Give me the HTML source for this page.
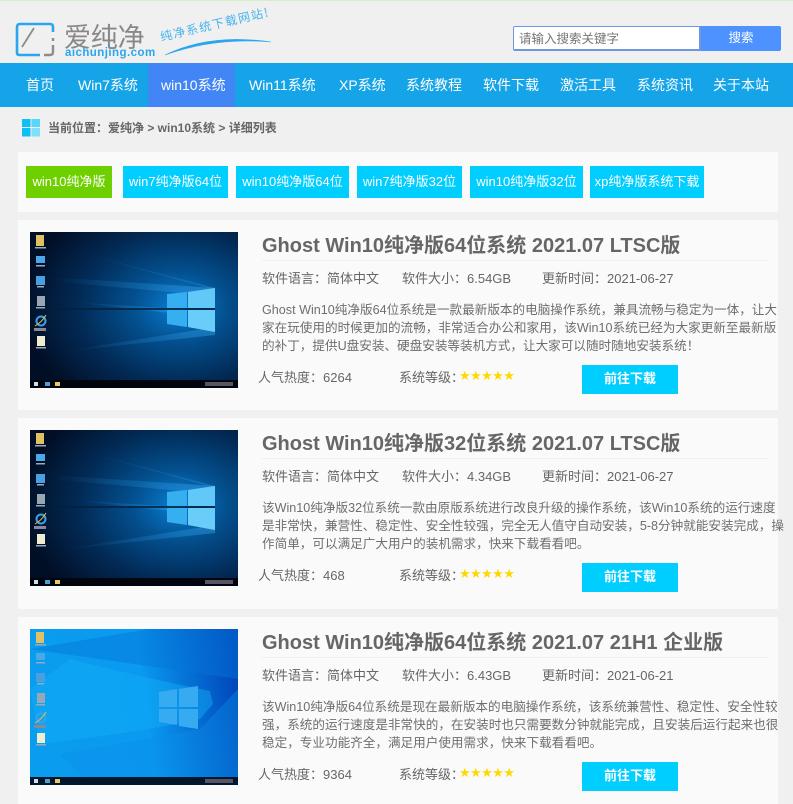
<!DOCTYPE html>
<html lang="zh-CN"><head><meta charset="utf-8"><title>win10系统</title>
<style>
*{margin:0;padding:0;box-sizing:border-box}
html,body{width:793px;height:804px;overflow:hidden;background:#f0f0f0}
body{position:relative;font-family:"Liberation Sans","Noto Sans CJK SC",sans-serif;color:#666;font-size:13px}
.a{position:absolute;white-space:nowrap}
.b{position:absolute}
.nav{color:#fff;font-size:14px;top:63px;height:44px;line-height:44px;text-align:center}
.tag{position:absolute;top:166px;height:32px;line-height:32px;text-align:center;color:#fff;background:#00ceff;font-size:13px}
.card{position:absolute;left:18px;width:760px;background:#fafafa}
.t{position:absolute;left:244px;top:12px;font-size:20px;font-weight:bold;color:#666;white-space:nowrap;line-height:28px}
.ln{position:absolute;left:244px;top:40px;width:506px;height:1px;background:#f0f0f0}
.m{position:absolute;top:50px;line-height:18px;white-space:nowrap;font-size:13px}
.d{position:absolute;left:244px;top:81px;line-height:18px;font-size:12.6px;white-space:nowrap;color:#6e6e6e}
.r{position:absolute;top:149px;line-height:18px;white-space:nowrap}
.s{position:absolute;left:441px;top:148px;color:#ffd800;font-size:13px;line-height:18px;letter-spacing:-.6px;white-space:nowrap;font-family:"DejaVu Sans",sans-serif}
.g{position:absolute;left:564px;top:145px;width:96px;height:29px;background:#00ceff;color:#fff;font-weight:bold;font-size:13px;line-height:28px;text-align:center}
.p{position:absolute;left:12px;top:12px;width:208px;height:156px;display:block}
</style></head><body>
<svg width="0" height="0" style="position:absolute">
<defs>
<radialGradient id="dg" cx="0.72" cy="0.48" r="0.75"><stop offset="0" stop-color="#0a7fd6"/><stop offset=".3" stop-color="#03508f"/><stop offset=".65" stop-color="#022a55"/><stop offset="1" stop-color="#010f26"/></radialGradient>
<linearGradient id="bg" x1="0" y1="0.5" x2="1" y2="0.4"><stop offset="0" stop-color="#0a9cee"/><stop offset=".55" stop-color="#0a9af0"/><stop offset="1" stop-color="#0147ba"/></linearGradient>
<linearGradient id="ray" x1="0" y1="0" x2="1" y2="0"><stop offset="0" stop-color="#1e8fe0" stop-opacity="0"/><stop offset="1" stop-color="#3eb0f5" stop-opacity=".85"/></linearGradient>
<g id="ic">
<rect x="6" y="3" width="8" height="11" fill="#e0c060"/><rect x="5" y="15" width="11" height="1.5" fill="#9ab"/>
<rect x="6" y="24" width="9" height="7" fill="#4aa8e8"/><rect x="6" y="33" width="9" height="1.5" fill="#9ab"/>
<rect x="6" y="44" width="9" height="9" fill="#4aa0de"/><rect x="7" y="54" width="7" height="1.5" fill="#9ab"/>
<rect x="7" y="64" width="8" height="10" fill="#99a7b2"/><rect x="6" y="75" width="9" height="1.5" fill="#9ab"/>
<circle cx="11" cy="89" r="4.5" fill="none" stroke="#3ba0e8" stroke-width="2"/><path d="M5 94Q12 90 16 83" stroke="#e8c040" fill="none"/><rect x="4" y="96" width="12" height="3" fill="#889"/>
<rect x="7" y="104" width="8" height="10" fill="#f0ecd0"/><rect x="6" y="115" width="10" height="1.5" fill="#9ab"/>
</g>
<symbol id="dk" viewBox="0 0 208 156">
<rect width="208" height="156" fill="url(#dg)"/>
<path d="M20 45L185 56 185 64 30 50Z" fill="url(#ray)" opacity=".5"/>
<path d="M40 70L150 77 150 82Z" fill="url(#ray)" opacity=".45"/>
<path d="M30 120L185 95 185 103Z" fill="url(#ray)" opacity=".45"/>
<path d="M30 15L185 56 185 58Z" fill="url(#ray)" opacity=".3"/>
<rect x="15" y="76" width="170" height="2" fill="#01213f" opacity=".8"/>
<path d="M137 62L157 60V76H137ZM158 60L185 56V76H158ZM137 78H157V95L137 92ZM158 78H185V100L158 95Z" fill="#36aff0"/>
<path d="M158 60L185 56V76H158Z" fill="#62c8f8"/><path d="M158 78H185V100L158 95Z" fill="#6accf8"/>
<use href="#ic"/>
<rect y="148" width="208" height="8" fill="#01060e"/>
<rect x="4" y="150" width="4" height="4" fill="#cde"/><rect x="15" y="150" width="5" height="4" fill="#4aa0d0"/><rect x="25" y="150" width="5" height="4" fill="#e8c868"/><rect x="175" y="150" width="28" height="4" fill="#556"/>
</symbol>
<symbol id="lt" viewBox="0 0 208 156">
<rect width="208" height="156" fill="url(#bg)"/>
<path d="M0 20L208 50V0H120Z" fill="#0576d6" opacity=".45"/>
<path d="M30 125L170 100 208 60V156H60Z" fill="#0b8ee8" opacity=".4"/>
<path d="M40 30Q120 50 180 62L183 75 170 90Q100 105 10 115L0 60Z" fill="#12b0f8" opacity=".45"/>
<path d="M129 63L147 60V78H129ZM149 60L168 57V78H149ZM129 80H147V96L129 93ZM149 80H168V100L149 97Z" fill="#37abf2"/>
<use href="#ic"/>
<rect y="148" width="208" height="8" fill="#03172c"/>
<rect x="4" y="150" width="4" height="4" fill="#cde"/><rect x="15" y="150" width="5" height="4" fill="#4aa0d0"/><rect x="25" y="150" width="5" height="4" fill="#e8c868"/><rect x="175" y="150" width="28" height="4" fill="#556"/>
</symbol>
</defs></svg>

<div class="b" style="left:0;top:0;width:793px;height:1px;background:#d4f0c8"></div>

<svg class="b" style="left:14px;top:20px" width="42" height="40" viewBox="0 0 42 40">
<path d="M24 4H6Q3 4 3 7V33Q3 35 6 35H26" fill="none" stroke="#2aa6ee" stroke-width="2.6"/>
<path d="M24 4H36Q39 4 39 7V12" fill="none" stroke="#2aa6ee" stroke-width="2.6"/>
<path d="M8 27L20 8" stroke="#8c8c8c" stroke-width="1.8" fill="none"/>
<path d="M39 18V21M39 25V32Q39 35 36 35H30" stroke="#8c8c8c" stroke-width="2.4" fill="none"/>
</svg>
<div class="a" style="left:64px;top:21px;font-size:27px;line-height:30px;color:#888;letter-spacing:-.2px;width:84px;font-family:'Noto Sans CJK SC',sans-serif">爱纯净</div>
<div class="a" style="left:65px;top:46px;font-size:11.5px;line-height:14px;font-weight:bold;color:#2aa6ee;letter-spacing:.45px">aichunjing.com</div>
<div class="a" style="left:162px;top:27px;font-size:12px;line-height:14px;color:#45b4ee;transform:rotate(-13deg);transform-origin:0 100%;letter-spacing:1.3px;top:30px;font-family:'Noto Sans CJK SC',sans-serif">纯净系统下载网站!</div>
<svg class="b" style="left:160px;top:30px" width="115" height="30" viewBox="0 0 115 30"><path d="M5 25Q50 3 111 12Q55 7 5 25Z" fill="#2aa6ee" stroke="#2aa6ee" stroke-width=".6"/></svg>

<div class="b" style="left:513px;top:26px;width:188px;height:25px;background:#fff;border:1px solid #6f97e0;border-width:1px 2px 2px 1px;border-radius:2px 0 0 2px"></div>
<div class="a" style="left:519px;top:30px;line-height:18px;font-size:12.5px;color:#757575">请输入搜索关键字</div>
<div class="b" style="left:701px;top:26px;width:80px;height:25px;background:#4e92ff;color:#fff;text-align:center;line-height:25px;font-size:12.5px;border-radius:0 2px 2px 0">搜索</div>

<div class="b" style="left:0;top:63px;width:793px;height:44px;background:#16a4e9"></div>
<div class="b" style="left:148px;top:63px;width:87px;height:44px;background:#4285f4"></div>
<div class="a nav" style="left:26px">首页</div>
<div class="a nav" style="left:78px">Win7系统</div>
<div class="a nav" style="left:161px">win10系统</div>
<div class="a nav" style="left:249px">Win11系统</div>
<div class="a nav" style="left:339px">XP系统</div>
<div class="a nav" style="left:406px">系统教程</div>
<div class="a nav" style="left:483px">软件下载</div>
<div class="a nav" style="left:560px">激活工具</div>
<div class="a nav" style="left:637px">系统资讯</div>
<div class="a nav" style="left:713px">关于本站</div>

<svg class="b" style="left:22px;top:119px" width="18" height="18" viewBox="0 0 18 18"><rect width="8.5" height="8" fill="#0fc0f5"/><rect x="9.5" width="8.5" height="8" fill="#55d6fa"/><rect y="9" width="8.5" height="8.5" fill="#0fc0f5"/><rect x="9.5" y="9" width="8.5" height="8.5" fill="#7fe0fb"/></svg>
<div class="a" style="left:48px;top:119px;line-height:18px;font-size:12px;font-weight:bold;color:#666">当前位置：爱纯净 &gt; win10系统 &gt; 详细列表</div>

<div class="b" style="left:18px;top:152px;width:760px;height:60px;background:#fafafa"></div>
<div class="tag" style="left:26px;width:86px;background:#6fd000">win10纯净版</div>
<div class="tag" style="left:123px;width:105px">win7纯净版64位</div>
<div class="tag" style="left:236px;width:113px">win10纯净版64位</div>
<div class="tag" style="left:357px;width:105px">win7纯净版32位</div>
<div class="tag" style="left:470px;width:113px">win10纯净版32位</div>
<div class="tag" style="left:590px;width:114px">xp纯净版系统下载</div>

<div class="card" style="top:220px;height:190px">
<svg class="p"><use href="#dk" width="208" height="156"/></svg>
<div class="t">Ghost Win10纯净版64位系统 2021.07 LTSC版</div><div class="ln"></div>
<div class="m" style="left:244px">软件语言：简体中文</div><div class="m" style="left:384px">软件大小：6.54GB</div><div class="m" style="left:524px">更新时间：2021-06-27</div>
<div class="d">Ghost Win10纯净版64位系统是一款最新版本的电脑操作系统，兼具流畅与稳定为一体，让大<br>家在玩使用的时候更加的流畅，非常适合办公和家用，该Win10系统已经为大家更新至最新版<br>的补丁，提供U盘安装、硬盘安装等装机方式，让大家可以随时随地安装系统！</div>
<div class="r" style="left:240px">人气热度：6264</div><div class="r" style="left:381px">系统等级：</div><div class="s">★★★★★</div><div class="g">前往下载</div>
</div>

<div class="card" style="top:418px;height:191px">
<svg class="p"><use href="#dk" width="208" height="156"/></svg>
<div class="t">Ghost Win10纯净版32位系统 2021.07 LTSC版</div><div class="ln"></div>
<div class="m" style="left:244px">软件语言：简体中文</div><div class="m" style="left:384px">软件大小：4.34GB</div><div class="m" style="left:524px">更新时间：2021-06-27</div>
<div class="d">该Win10纯净版32位系统一款由原版系统进行改良升级的操作系统，该Win10系统的运行速度<br>是非常快，兼营性、稳定性、安全性较强，完全无人值守自动安装，5-8分钟就能安装完成，操<br>作简单，可以满足广大用户的装机需求，快来下载看看吧。</div>
<div class="r" style="left:240px">人气热度：468</div><div class="r" style="left:381px">系统等级：</div><div class="s">★★★★★</div><div class="g">前往下载</div>
</div>

<div class="card" style="top:617px;height:187px">
<svg class="p"><use href="#lt" width="208" height="156"/></svg>
<div class="t">Ghost Win10纯净版64位系统 2021.07 21H1 企业版</div><div class="ln"></div>
<div class="m" style="left:244px">软件语言：简体中文</div><div class="m" style="left:384px">软件大小：6.43GB</div><div class="m" style="left:524px">更新时间：2021-06-21</div>
<div class="d">该Win10纯净版64位系统是现在最新版本的电脑操作系统，该系统兼营性、稳定性、安全性较<br>强，系统的运行速度是非常快的，在安装时也只需要数分钟就能完成，且安装后运行起来也很<br>稳定，专业功能齐全，满足用户使用需求，快来下载看看吧。</div>
<div class="r" style="left:240px">人气热度：9364</div><div class="r" style="left:381px">系统等级：</div><div class="s">★★★★★</div><div class="g">前往下载</div>
</div>
</body></html>
